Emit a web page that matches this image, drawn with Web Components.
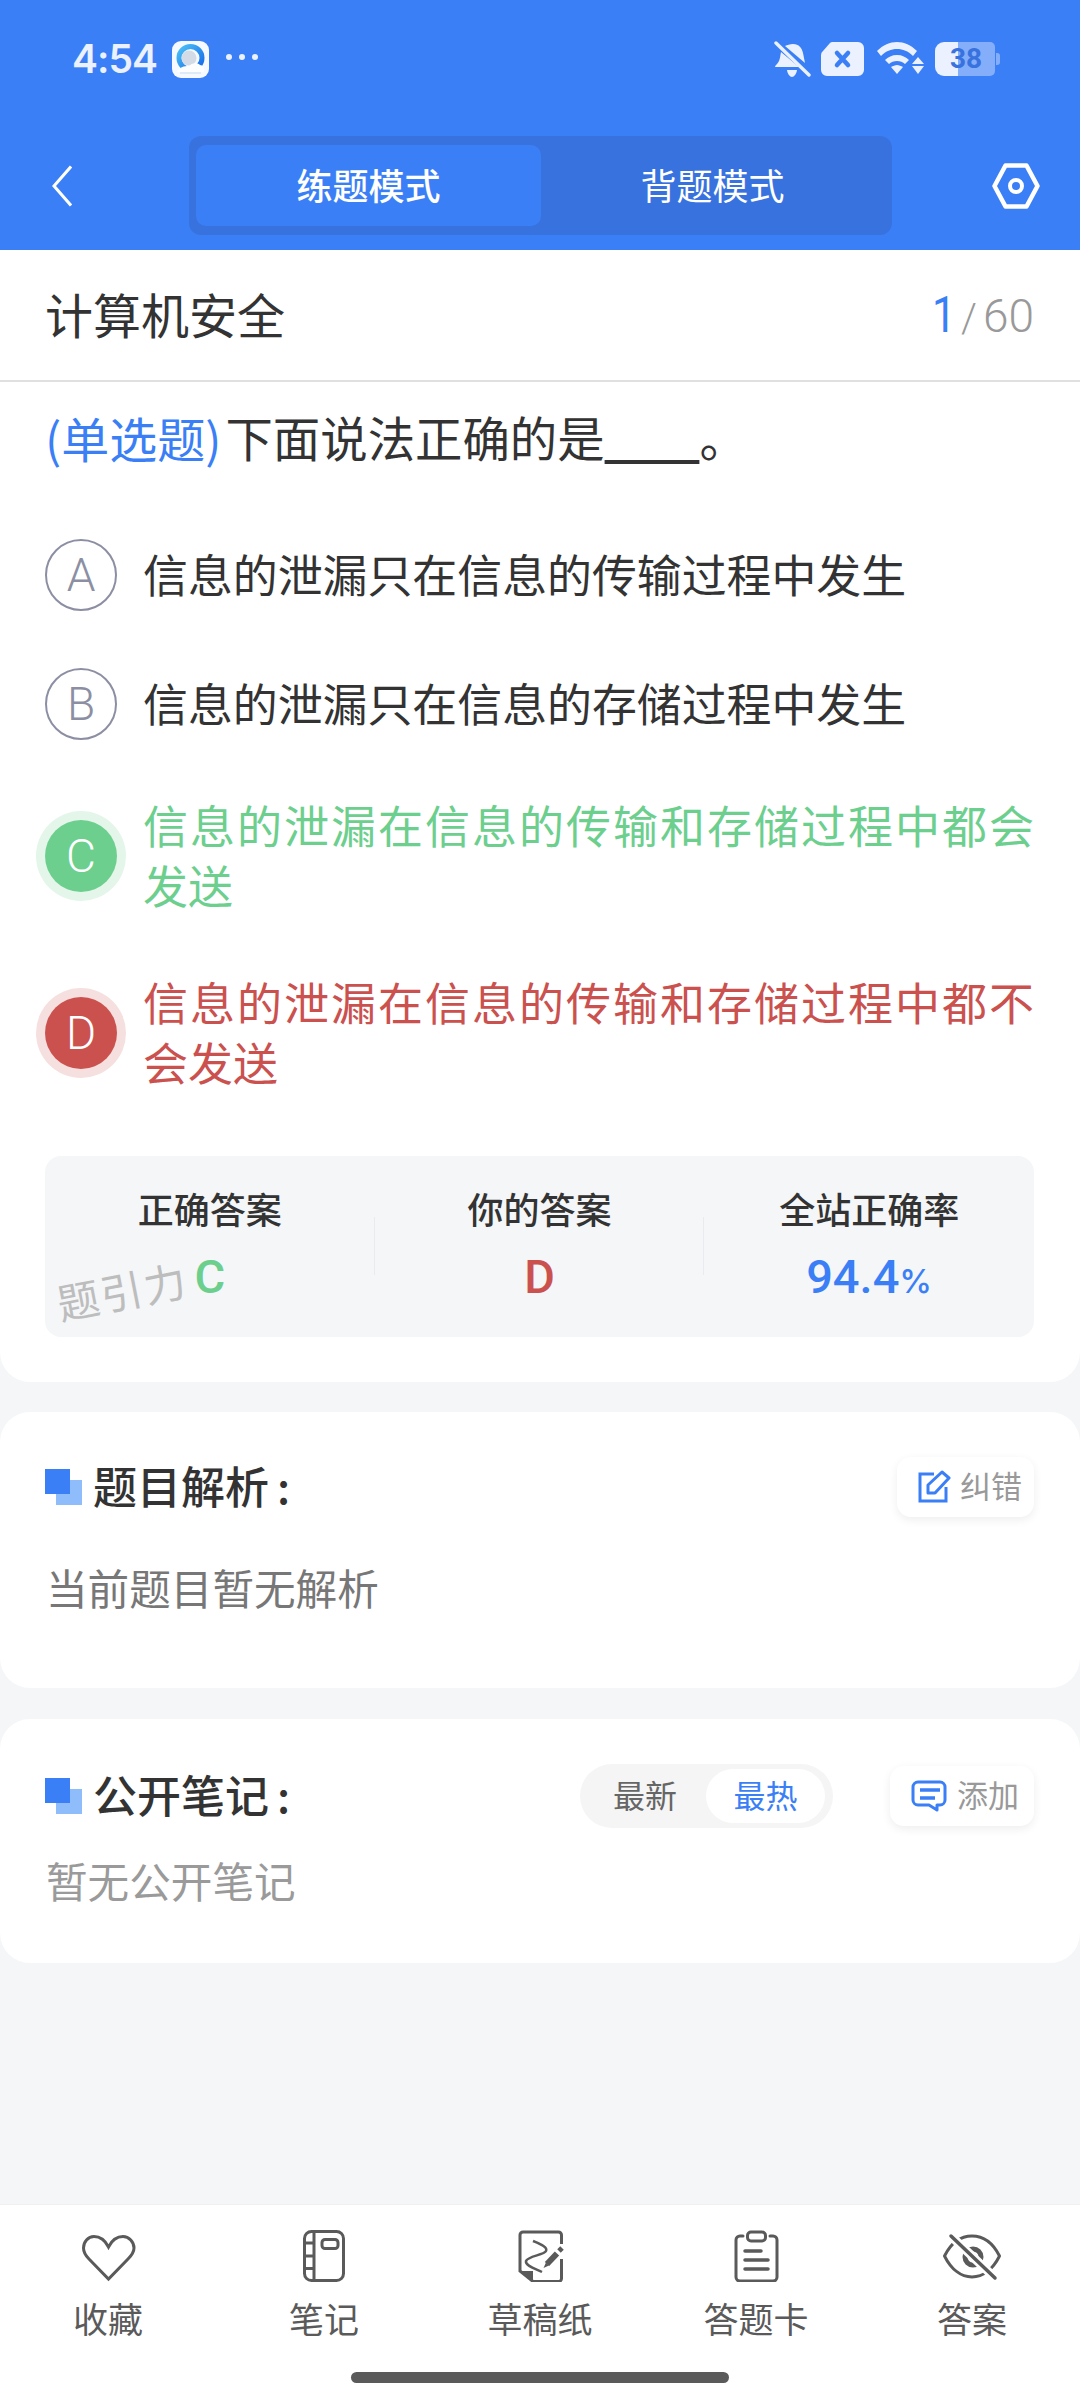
<!DOCTYPE html>
<html lang="zh-CN">
<head>
<meta charset="utf-8">
<title>计算机安全</title>
<style>
  html, body { margin: 0; padding: 0; }
  body {
    width: 1080px;
    height: 2400px;
    overflow: hidden;
    display: flex;
    flex-direction: column;
    background: #f4f6f8;
    font-family: "Noto Sans CJK SC", "Noto Sans", sans-serif;
    color: #333;
  }
</style>
</head>
<body>
  <app-header></app-header>
  <quiz-card>
    <span slot="course">计算机安全</span>
    <span slot="kind">(单选题)</span>
    <span slot="question">下面说法正确的是<u>&emsp;&emsp;</u>。</span>
    <quiz-option letter="A">信息的泄漏只在信息的传输过程中发生</quiz-option>
    <quiz-option letter="B">信息的泄漏只在信息的存储过程中发生</quiz-option>
    <quiz-option letter="C" state="right">信息的泄漏在信息的传输和存储过程中都会发送</quiz-option>
    <quiz-option letter="D" state="wrong">信息的泄漏在信息的传输和存储过程中都不会发送</quiz-option>
    <answer-stats slot="stats"></answer-stats>
  </quiz-card>
  <section-card heading="题目解析" top="30" gap="40" bottom="71">
    <tool-button slot="actions" icon="edit" style="width:137px;padding-left:21px;height:60px;gap:8px">纠错</tool-button>
    <span style="color:#777">当前题目暂无解析</span>
  </section-card>
  <section-card heading="公开笔记" top="31" gap="22" bottom="53">
    <sort-pill slot="actions"></sort-pill>
    <tool-button slot="actions" icon="note" style="width:144px;padding-left:21px;height:60px;gap:10px">添加</tool-button>
    <span style="color:#9a9a9a">暂无公开笔记</span>
  </section-card>
  <bottom-nav>
    <nav-item icon="heart">收藏</nav-item>
    <nav-item icon="book">笔记</nav-item>
    <nav-item icon="draft">草稿纸</nav-item>
    <nav-item icon="card">答题卡</nav-item>
    <nav-item icon="eye">答案</nav-item>
  </bottom-nav>

<script>
class AppHeader extends HTMLElement {
  constructor() {
    super()
    this.attachShadow({ mode: 'open' }).innerHTML = `
      <style>
        :host { display: block; height: 250px; background: #3b7ff6; color: #fff; flex: none; }
        .status { height: 120px; display: flex; align-items: center; justify-content: space-between; padding: 0 80px 2px 72px; box-sizing: border-box; color: #ebf1fe; }
        .left, .right { display: flex; align-items: center; }
        .time { font: 600 39px/48px Inter, Roboto, sans-serif; letter-spacing: -1px; width: 100px; }
        .app { margin-right: 17px; display: block; }
        .dots { display: flex; gap: 7px; margin-bottom: 4px; }
        .dots i { width: 6px; height: 6px; border-radius: 50%; background: #ebf1fe; }
        .battery { position: relative; width: 65px; height: 34px; margin-left: 11px; }
        .battery b { position: absolute; left: 15px; top: 0; font: 700 28px/34px Roboto, sans-serif; color: #3872de; }
        .bar { display: flex; align-items: center; height: 130px; padding: 1px 40px 0 52px; box-sizing: border-box; }
        .back { width: 20px; height: 42px; }
        .tabs { margin-left: 117px; width: 703px; height: 99px; box-sizing: border-box; padding: 9px 7px; background: #3872de; border-radius: 12px; display: flex; }
        .tab { flex: 0 0 345px; display: flex; align-items: center; justify-content: center; font-size: 36px; border-radius: 10px; padding-bottom: 3px; box-sizing: border-box; }
        .tab.on { background: #3b7ff6; font-weight: 500; }
        .tab + .tab { flex: 0 0 343px; }
        .gear { margin-left: 100px; width: 48px; height: 46px; }
      </style>
      <div class="status">
        <div class="left">
          <span class="time">4:54</span>
          <svg class="app" width="37" height="37" viewBox="0 0 37 37">
            <defs><linearGradient id="ql" x1="0" y1="0" x2="1" y2="1"><stop offset="0" stop-color="#4cc0f7"/><stop offset="1" stop-color="#1468e6"/></linearGradient></defs>
            <rect width="37" height="37" rx="9" fill="#f6f9ff"/>
            <circle cx="18.500" cy="17" r="11.500" fill="none" stroke="url(#ql)" stroke-width="5"/>
            <circle cx="17" cy="17" r="7.500" fill="#d3dbe6"/>
            <path d="M5 31c2-5 7-6 12-6 2-3 9-4 11-1 3 0 5 3 4 7z" fill="#fdfeff"/>
            <path d="M8 32h21" stroke="#d5e4f6" stroke-width="1.500"/>
          </svg>
          <span class="dots"><i></i><i></i><i></i></span>
        </div>
        <div class="right">
          <svg width="37" height="37" viewBox="0 0 37 37" fill="#ebf1fe">
            <path d="M19 3c6 0 9 4 10 9l2 10-20-17c2-1 5-2 8-2zM7 11l18 15H1c0-1 1-2 2-3 3-3 3-7 4-12zM13 29h10c-.5 4-3 7-5 7s-4.500-3-5-7z"/>
            <path d="M2 2l33 32" stroke="#ebf1fe" stroke-width="3.400" stroke-linecap="round"/>
          </svg>
          <svg style="margin-left:10px" width="43" height="34" viewBox="0 0 43 34">
            <path d="M12 0H37a6 6 0 0 1 6 6V28a6 6 0 0 1-6 6H6a6 6 0 0 1-6-6V13a5 5 0 0 1 2-4L9 1a4 4 0 0 1 3-1z" fill="#ebf1fe"/>
            <path d="M16 11l11 12M27 11L16 23" stroke="#3b7ff6" stroke-width="4.500" stroke-linecap="round"/>
          </svg>
          <svg style="margin-left:12px" width="48" height="34" viewBox="0 0 48 34" fill="#ebf1fe">
            <path d="M1 9C7 3 14 0 21 0s14 3 20 9l-4 5C32 9 27 7 21 7S10 9 5 14z"/>
            <path d="M9 18c3-3 7-5 12-5s9 2 12 5l-4 4c-2-2-5-3-8-3s-6 1-8 3z"/>
            <path d="M15 25c2-1 4-2 6-2s4 1 6 2l-6 7z"/>
            <path d="M42 15l6 7H36zM36 24h12l-6 8z"/>
          </svg>
          <div class="battery">
            <svg width="65" height="34" viewBox="0 0 65 34">
              <path d="M23 0H55a5 5 0 0 1 5 5V29a5 5 0 0 1-5 5H23z" fill="#ebf1fe" opacity=".42"/>
              <path d="M61 11h1a3 3 0 0 1 3 3v6a3 3 0 0 1-3 3h-1z" fill="#ebf1fe" opacity=".42"/>
              <path d="M9 0H23V34H9a9 9 0 0 1-9-9V9a9 9 0 0 1 9-9z" fill="#ebf1fe"/>
            </svg>
            <b>38</b>
          </div>
        </div>
      </div>
      <div class="bar">
        <svg class="back" viewBox="0 0 20 42" fill="none" stroke="#fff" stroke-width="3"><path d="M19 1.500L2 21l17 19.500"/></svg>
        <div class="tabs">
          <div class="tab on">练题模式</div>
          <div class="tab">背题模式</div>
        </div>
        <svg class="gear" viewBox="0 0 48 46" fill="none" stroke="#fff">
          <path d="M13.500 2.500h21L45.500 23l-11 20.500h-21L2.500 23z" stroke-width="4.500" stroke-linejoin="round"/>
          <circle cx="24" cy="23" r="6" stroke-width="4"/>
        </svg>
      </div>`
  }
}

class QuizCard extends HTMLElement {
  constructor() {
    super()
    this.attachShadow({ mode: 'open' }).innerHTML = `
      <style>
        :host { display: block; flex: none; background: #fff; border-radius: 0 0 30px 30px; padding-bottom: 45px; }
        .head { height: 132px; box-sizing: border-box; display: flex; align-items: center; justify-content: space-between; padding: 0 46px 5px 45px; border-bottom: 2px solid #e0e0e0; font-size: 48px; color: #333; }
        .count { display: flex; align-items: baseline; padding-top: 5px; font-family: Roboto, sans-serif; font-weight: 300; color: #999; font-size: 46px; }
        .count b { font-weight: 400; font-size: 50px; color: #3b7ff6; margin-right: 3px; transform: scaleX(.85); }
        .count i { font-style: normal; margin-right: 6px; font-size: 40px; }
        .question { margin: 25px 46px 72px 45px; font-size: 47.400px; line-height: 60px; white-space: nowrap; display: flex; color: #333; }
        .kind { color: #3b7ff6; font-size: 48px; margin-right: 4px; }
        .options { display: flex; flex-direction: column; gap: 56.670px; padding: 0 46px 0 45px; }
        .stats { display: block; margin: 63px 46px 0 45px; }
      </style>
      <div class="head"><slot name="course"></slot><span class="count"><b>1</b><i>/</i>60</span></div>
      <div class="question"><span class="kind"><slot name="kind"></slot></span><slot name="question"></slot></div>
      <div class="options"><slot></slot></div>
      <div class="stats"><slot name="stats"></slot></div>`
  }
}

class QuizOption extends HTMLElement {
  constructor() {
    super()
    const state = this.getAttribute('state') || ''
    this.attachShadow({ mode: 'open' }).innerHTML = `
      <style>
        :host { display: grid; grid-template-columns: 72px 1fr; column-gap: 26px; align-items: center; min-height: 72px; }
        .badge { width: 72px; height: 72px; box-sizing: border-box; border-radius: 50%; border: 2px solid #8c8fa3; color: #8c8fa3; display: flex; align-items: center; justify-content: center; font: 300 46px/1 Roboto, sans-serif; }
        .text { font-size: 44.900px; line-height: 60px; color: #333; transform: translateY(-1px); }
        .right .badge, .wrong .badge { border: 0; color: #fff; }
        .right .text, .wrong .text { font-size: 45px; text-align: justify; }
        .right .badge { background: #6ccf8e; box-shadow: 0 0 0 9px #e4f6ea; }
        .right .text { color: #6ccf8e; }
        .wrong .badge { background: #cb514f; box-shadow: 0 0 0 9px #f6dfdf; }
        .wrong .text { color: #cb514f; }
        .wrap { display: contents; }
      </style>
      <div class="wrap ${state}">
        <div class="badge">${this.getAttribute('letter')}</div>
        <div class="text"><slot></slot></div>
      </div>`
  }
}

class AnswerStats extends HTMLElement {
  constructor() {
    super()
    this.attachShadow({ mode: 'open' }).innerHTML = `
      <style>
        :host { display: grid; grid-template-columns: repeat(3, 1fr); position: relative; height: 181px; background: #f4f6f8; border-radius: 16px; }
        .cell { position: relative; padding-top: 27px; text-align: center; }
        .cell + .cell::before { content: ""; position: absolute; left: -1px; top: 61px; height: 58px; width: 1px; background: #e9ebee; }
        .label { font-size: 36px; line-height: 50px; font-weight: 500; color: #333; }
        .value { margin-top: 16px; font: 500 47px/56px Roboto, sans-serif; }
        .value small { font: 500 33px Inter, Roboto, sans-serif; }
        .mark { position: absolute; left: 11px; top: 109px; font-size: 42px; line-height: 50px; color: #bdbdbd; transform: rotate(-11deg); white-space: nowrap; letter-spacing: 2px; }
      </style>
      <div class="cell"><div class="label">正确答案</div><div class="value" style="color:#6ccf8e">C</div></div>
      <div class="cell"><div class="label">你的答案</div><div class="value" style="color:#cb514f">D</div></div>
      <div class="cell"><div class="label">全站正确率</div><div class="value" style="color:#3b7ff6">94.4<small>%</small></div></div>
      <div class="mark">题引力</div>`
  }
}

class SectionCard extends HTMLElement {
  constructor() {
    super()
    const top = this.getAttribute('top')
    const gap = this.getAttribute('gap')
    const bottom = this.getAttribute('bottom')
    this.attachShadow({ mode: 'open' }).innerHTML = `
      <style>
        :host { display: block; flex: none; background: #fff; border-radius: 30px; margin-top: ${top}px; padding: 45px 46px ${bottom}px 45px; }
        .head { display: flex; align-items: center; min-height: 60px; }
        .mark { position: relative; width: 37px; height: 36px; margin-right: 11px; flex: none; }
        .mark::before { content: ""; position: absolute; left: 11px; top: 11px; width: 26px; height: 25px; background: #8fbcfb; }
        .mark::after { content: ""; position: absolute; left: 0; top: 0; width: 25px; height: 25px; background: #3b7ff6; }
        h2 { margin: 0 0 3px; font-size: 44px; line-height: 56px; font-weight: 500; color: #333; flex: 1; }
        h2 span { margin-left: 8px; }
        .actions { display: flex; align-items: center; gap: 57px; }
        .body { margin-top: ${gap}px; padding-left: 1px; font-size: 41.600px; line-height: 60px; }
      </style>
      <div class="head">
        <span class="mark"></span>
        <h2>${this.getAttribute('heading')}<span>:</span></h2>
        <div class="actions"><slot name="actions"></slot></div>
      </div>
      <div class="body"><slot></slot></div>`
  }
}

const TOOL_ICONS = {
  edit: `<svg width="34" height="34" viewBox="0 0 34 34" fill="none" stroke="#3b7ff6" stroke-width="3">
      <path d="M16 4H2V31H28V17"/><path d="M10 23V15L24 2l7 6L17 23z" stroke-linejoin="round"/></svg>`,
  note: `<svg width="36" height="32" viewBox="0 0 36 32" fill="none" stroke="#3b7ff6" stroke-width="3">
      <path d="M7 2H29a5 5 0 0 1 5 5V20a5 5 0 0 1-5 5H26V30L18 25H7a5 5 0 0 1-5-5V7a5 5 0 0 1 5-5z" stroke-linejoin="round"/>
      <path d="M9 10H29M9 18H24" stroke-width="3.500"/></svg>`,
}

class ToolButton extends HTMLElement {
  constructor() {
    super()
    this.attachShadow({ mode: 'open' }).innerHTML = `
      <style>
        :host { display: flex; align-items: center; box-sizing: border-box; background: #fff; border-radius: 14px; box-shadow: 0 3px 10px rgba(0, 0, 0, .07); font-size: 31px; color: #999; white-space: nowrap; }
        svg { display: block; flex: none; }
        span { padding-bottom: 4px; }
      </style>
      ${TOOL_ICONS[this.getAttribute('icon')]}<span><slot></slot></span>`
  }
}

class SortPill extends HTMLElement {
  constructor() {
    super()
    this.attachShadow({ mode: 'open' }).innerHTML = `
      <style>
        :host { display: flex; align-items: center; width: 253px; height: 64px; box-sizing: border-box; padding: 5px 7px 5px 33px; background: #f5f5f5; border-radius: 32px; font-size: 32px; color: #666; }
        span { padding-bottom: 3px; }
        .on { margin-left: 29px; width: 119px; height: 54px; box-sizing: border-box; display: flex; align-items: center; justify-content: center; background: #fff; border-radius: 27px; color: #3b7ff6; }
      </style>
      <span>最新</span><span class="on">最热</span>`
  }
}

class BottomNav extends HTMLElement {
  constructor() {
    super()
    this.attachShadow({ mode: 'open' }).innerHTML = `
      <style>
        :host { display: block; margin-top: auto; height: 196px; box-sizing: border-box; padding-top: 25px; background: #fff; border-top: 1px solid #eef0f2; flex: none; }
        .items { display: grid; grid-template-columns: repeat(5, 216px); }
        .home { width: 378px; height: 11px; margin: 31px auto 0; background: #5a5a5a; border-radius: 6px; }
      </style>
      <div class="items"><slot></slot></div>
      <div class="home"></div>`
  }
}

const NAV_ICONS = {
  heart: `<path d="M32.500 17C29 10 24 6.500 18 6.500 12 6.500 7.500 12 7.500 18c0 5 2.500 8 5.500 11l19.500 20L52 29c3-3 6-6 6-11 0-6-5-11.500-11-11.500-6 0-11 3.500-14.500 10.500z"/>`,
  book: `<rect x="12.500" y="1.500" width="39" height="49" rx="7"/>
    <path d="M22 1.500V50.500M12.500 13H22M12.500 26H22M12.500 38.500H22"/>
    <rect x="30" y="9.500" width="16" height="9" rx="3"/>`,
  draft: `<path d="M53.500 14V5a3 3 0 0 0-3-3H15a3 3 0 0 0-3 3V41L25 51.500H50.500a3 3 0 0 0 3-3V29"/>
    <path d="M12 41H25V52z" fill="#5a5a5a" stroke="none"/>
    <path d="M25 11C32 14 40 17 38 21 36 25 20 26 18 31 17 36 28 39 34 42" stroke-width="2.500"/>
    <path d="M39 34L49 23.500" stroke-width="6"/>
    <path d="M51 21L54 18" stroke-width="5"/>
    <path d="M35.500 38L38 32.500 41 35.500z" fill="#5a5a5a" stroke="none"/>`,
  card: `<path d="M19 6H16a4 4 0 0 0-4 4V47a4 4 0 0 0 4 4H49a4 4 0 0 0 4-4V10a4 4 0 0 0-4-4H46" stroke-linecap="round"/>
    <rect x="23.500" y="2" width="18" height="9" rx="3.500"/>
    <path d="M21 21H37M21 30H44M21 39H44" stroke-width="3.500" stroke-linecap="round"/>`,
  eye: `<path d="M4.500 26C11 13 21 6 32 6S53 13 59.500 26C53 39 43 47 32 47S11 39 4.500 26z" stroke-linejoin="round"/>
    <circle cx="33" cy="27" r="8" stroke-width="5"/>
    <path d="M11 6L55 48" stroke="#fff" stroke-width="9"/>
    <path d="M11 6L55 48" stroke-linecap="round" stroke-width="3.500"/>`,
}

class NavItem extends HTMLElement {
  constructor() {
    super()
    this.attachShadow({ mode: 'open' }).innerHTML = `
      <style>
        :host { display: flex; flex-direction: column; align-items: center; font-size: 35px; color: #5a5a5a; }
        svg { display: block; width: 64px; height: 52px; }
        span { margin-top: 13px; line-height: 46px; }
      </style>
      <svg viewBox="0 0 64 52" fill="none" stroke="#5a5a5a" stroke-width="3">${NAV_ICONS[this.getAttribute('icon')]}</svg>
      <span><slot></slot></span>`
  }
}

customElements.define('app-header', AppHeader)
customElements.define('quiz-option', QuizOption)
customElements.define('quiz-card', QuizCard)
customElements.define('answer-stats', AnswerStats)
customElements.define('tool-button', ToolButton)
customElements.define('sort-pill', SortPill)
customElements.define('section-card', SectionCard)
customElements.define('nav-item', NavItem)
customElements.define('bottom-nav', BottomNav)
</script>
</body>
</html>
